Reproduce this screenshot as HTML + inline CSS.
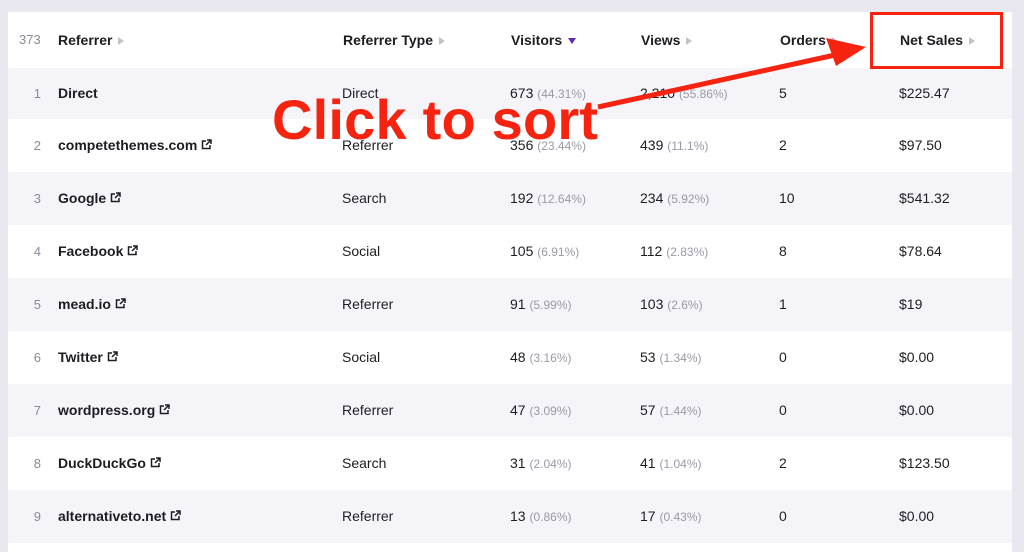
<!DOCTYPE html><html><head><style>
body{margin:0;width:1024px;height:546px;background:#e9e8f1;font-family:"Liberation Sans",sans-serif;position:relative;overflow:hidden;color:#1d1d22}
.card{position:absolute;left:8px;top:12px;width:1004px;height:540px;background:#fff}
.hdr{position:absolute;left:8px;top:12px;width:1004px;height:56px;border-bottom:1px solid #dcdbe6;background:#fff}
.row{position:absolute;left:8px;width:1004px;height:53px}
.row.s{background:#f5f4f9}
.c{position:absolute;top:0;line-height:53px;font-size:14px;white-space:nowrap}
.h{position:absolute;top:12px;line-height:56px;font-size:14px;font-weight:bold;white-space:nowrap}
.n{color:#8a8996;font-size:13px;width:33px;text-align:right;left:0}
.b{font-weight:bold}
.p{color:#9a99a6;font-size:12px}
.tri{display:inline-block;width:0;height:0;border-left:6px solid #c4c3cc;border-top:4px solid transparent;border-bottom:4px solid transparent;margin-left:6px;vertical-align:0}
.dn{display:inline-block;width:0;height:0;border-top:6px solid #5b2bb5;border-left:4.5px solid transparent;border-right:4.5px solid transparent;margin-left:6px;vertical-align:1px}
svg.ext{vertical-align:0;margin-left:4px}
</style></head><body>
<div class="card"></div>
<div class="hdr"></div>
<div class="h" style="left:19px;font-weight:normal;color:#8a8996;font-size:13px">373</div>
<div class="h" style="left:58px">Referrer<span class="tri"></span></div>
<div class="h" style="left:343px">Referrer Type<span class="tri"></span></div>
<div class="h" style="left:511px">Visitors<span class="dn"></span></div>
<div class="h" style="left:641px">Views<span class="tri"></span></div>
<div class="h" style="left:780px">Orders<span class="tri"></span></div>
<div class="h" style="left:900px">Net Sales<span class="tri"></span></div>
<div id="rows"></div>
<script>
var d=[["Direct","Direct","673","44.31%","2,210","55.86%","5","$225.47",0],
["competethemes.com","Referrer","356","23.44%","439","11.1%","2","$97.50",1],
["Google","Search","192","12.64%","234","5.92%","10","$541.32",1],
["Facebook","Social","105","6.91%","112","2.83%","8","$78.64",1],
["mead.io","Referrer","91","5.99%","103","2.6%","1","$19",1],
["Twitter","Social","48","3.16%","53","1.34%","0","$0.00",1],
["wordpress.org","Referrer","47","3.09%","57","1.44%","0","$0.00",1],
["DuckDuckGo","Search","31","2.04%","41","1.04%","2","$123.50",1],
["alternativeto.net","Referrer","13","0.86%","17","0.43%","0","$0.00",1]];
var ext='<svg class="ext" width="11" height="11" viewBox="0 0 11 11"><path d="M5 2H1.5v7.5H9V6" fill="none" stroke="#1d1d22" stroke-width="1.5"/><path d="M6 1h4v4M10 1L5 6" fill="none" stroke="#1d1d22" stroke-width="1.5"/></svg>';
var h='';
d.forEach(function(r,i){var top=i==0?68:119+53*(i-1);var ht=i==0?51:53;
h+='<div class="row'+(i%2==0?' s':'')+'" style="top:'+top+'px;height:'+ht+'px">'+
'<div class="c n" style="line-height:'+ht+'px">'+(i+1)+'</div>'+
'<div class="c b" style="left:50px;line-height:'+ht+'px">'+r[0]+(r[8]?ext:'')+'</div>'+
'<div class="c" style="left:334px;line-height:'+ht+'px">'+r[1]+'</div>'+
'<div class="c" style="left:502px;line-height:'+ht+'px">'+r[2]+' <span class="p">('+r[3]+')</span></div>'+
'<div class="c" style="left:632px;line-height:'+ht+'px">'+r[4]+' <span class="p">('+r[5]+')</span></div>'+
'<div class="c" style="left:771px;line-height:'+ht+'px">'+r[6]+'</div>'+
'<div class="c" style="left:891px;line-height:'+ht+'px">'+r[7]+'</div></div>';});
document.getElementById('rows').innerHTML=h;
</script>
<div style="position:absolute;left:870px;top:12px;width:127px;height:51px;border:3px solid #f5230f"></div>
<svg style="position:absolute;left:0;top:0" width="1024" height="546">
<line x1="598" y1="107" x2="835" y2="55" stroke="#f5230f" stroke-width="5"/>
<polygon points="866,47 826,38 836,66" fill="#f5230f"/>
</svg>
<div style="position:absolute;left:272px;top:87px;font-size:56px;font-weight:bold;color:#f5230f;line-height:66px;letter-spacing:0.2px">Click to sort</div>
</body></html>
